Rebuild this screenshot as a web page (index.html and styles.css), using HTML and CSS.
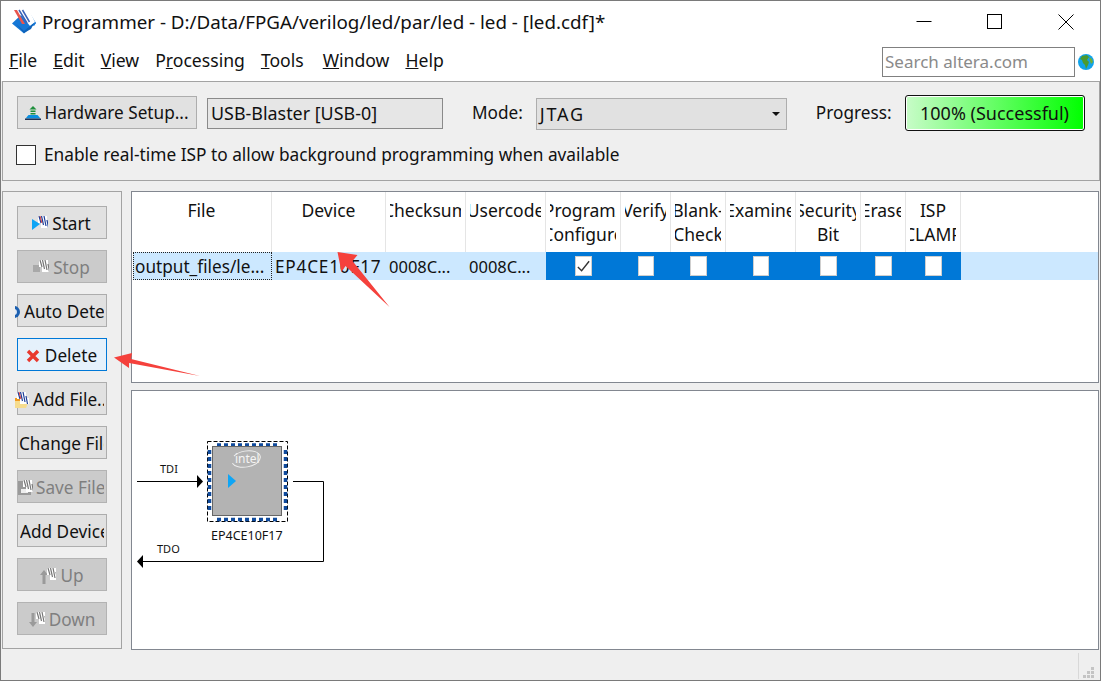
FILE: index.html
```html
<!DOCTYPE html>
<html lang="en">
<head>
<meta charset="utf-8">
<title>Programmer</title>
<link rel="stylesheet" href="styles.css">
</head>
<body>
<svg class="defs" width="0" height="0">
  <defs>
    <g id="chipmark">
      <path d="M0 0h9v6h3v6H3V7H0z" fill="#fff"/>
      <path d="M1 0l2 7M3.500 0l2 9M6 0l2 10M9 4l1.500 8" stroke="#1d3f9a" stroke-width="1.200" fill="none"/>
      <path d="M2 0l2 7" stroke="#e0433c" stroke-width="1"/>
    </g>
    <g id="graymark">
      <path d="M0 0h9v6h3v6H3V7H0z" fill="#fff"/>
      <path d="M1 0l2 7M3.500 0l2 9M6 0l2 10M9 4l1.500 8" stroke="#777" stroke-width="1.200" fill="none"/>
    </g>
  </defs>
</svg>
<div class="window">
  <header class="titlebar">
    <svg class="applogo" viewBox="0 0 26 26" width="26" height="26">
      <path d="M1 15.500L10 7l15 8-12 10.500z" fill="#1577d6"/>
      <path d="M14 4l4 0 7 11-2 3-9-6z" fill="#1577d6"/>
      <path d="M6 2h12l6 12-5 4z" fill="#fff"/>
      <path d="M3 2l8 14h3L6 2z" fill="#e8554e"/>
      <path d="M8 2l8 13M11.500 2l7 12" stroke="#3a62b8" stroke-width="1.500"/>
      <path d="M5 16l8 7 10-8-3 6-7 4z" fill="#0f62b8"/>
    </svg>
    <span class="title">Programmer - D:/Data/FPGA/verilog/led/par/led - led - [led.cdf]*</span>
    <div class="winctl">
      <svg width="16" height="16" viewBox="0 0 16 16"><path d="M0.500 7.500h15" stroke="#000"/></svg>
      <svg width="16" height="16" viewBox="0 0 16 16"><rect x="0.500" y="0.500" width="14" height="14" fill="none" stroke="#000"/></svg>
      <svg width="16" height="16" viewBox="0 0 16 16"><path d="M0.500 0.500l15 15M15.500 0.500l-15 15" stroke="#000"/></svg>
    </div>
  </header>
  <nav class="menubar">
    <span class="menu"><u>F</u>ile</span>
    <span class="menu"><u>E</u>dit</span>
    <span class="menu"><u>V</u>iew</span>
    <span class="menu">P<u>r</u>ocessing</span>
    <span class="menu tools"><u>T</u>ools</span>
    <span class="menu"><u>W</u>indow</span>
    <span class="menu"><u>H</u>elp</span>
    <div class="search">Search altera.com</div>
    <svg class="globe" viewBox="0 0 16 16" width="16" height="16">
      <circle cx="8" cy="8" r="8" fill="#11a3ea"/>
      <path d="M4 2l5-1 2 2-2 3 2 2-1 3-2 4-1-4-2-2-1-3-2-1z" fill="#4b9a2f"/>
      <path d="M11 3l3 2 1 3-2 2-1-3z" fill="#6fae3a"/>
    </svg>
  </nav>

  <section class="toolpanel">
    <div class="toolrow">
      <button class="btn hw">
        <svg class="ic" viewBox="0 0 16 16" width="16" height="16">
          <path d="M8 1l3.500 3.500h-7z" fill="#1f8f3c"/><path d="M5.500 5.500h5V7h-5zM5.500 8h5v1.500h-5z" fill="#1f8f3c"/>
          <path d="M3.500 10h9l3 3.500H.5z" fill="#0a8fe0"/><path d="M0 13.500h16V15H0z" fill="#235"/>
        </svg>
        <span>Hardware Setup...</span>
      </button>
      <div class="hwbox">USB-Blaster [USB-0]</div>
      <span class="modelabel">Mode:</span>
      <div class="select"><span>JTAG</span><i class="caret"></i></div>
      <span class="proglabel">Progress:</span>
      <div class="progress">100% (Successful)</div>
    </div>
    <label class="isprow"><span class="check"></span><span>Enable real-time ISP to allow background programming when available</span></label>
  </section>

  <main class="mainrow">
    <aside class="sidebar">
      <button class="btn side"><svg class="ic" viewBox="0 0 16 16" width="16" height="16"><path d="M0 3l8 5-8 6z" fill="#0ea5f5"/><use href="#chipmark" x="6" y="0"/></svg><span>Start</span></button>
      <button class="btn side off"><svg class="ic" viewBox="0 0 16 16" width="16" height="16"><rect x="0" y="5" width="7" height="7" fill="#a8a8a8"/><use href="#graymark" x="6" y="0"/></svg><span>Stop</span></button>
      <button class="btn side lead auto"><svg class="ic" viewBox="9 2 5 14" width="5" height="14"><circle cx="8" cy="9" r="6" fill="#1b5fb0"/><circle cx="8" cy="9" r="3" fill="#dfe9f5"/></svg><span>Auto Detect</span></button>
      <button class="btn side active"><svg class="ic" viewBox="0 0 14 14" width="14" height="14"><path d="M2 2l10 10M12 2L2 12" stroke="#e8392e" stroke-width="3.400"/></svg><span>Delete</span></button>
      <button class="btn side lead addfile"><svg class="ic" viewBox="0 0 14 16" width="14" height="16"><path d="M0 6h6l2 2h6l-3 8H0z" fill="#f6dc8e"/><path d="M0 6h5v3H0z" fill="#f29a1e"/><use href="#chipmark" x="2" y="0"/></svg><span>Add File...</span></button>
      <button class="btn side lead"><span>Change File...</span></button>
      <button class="btn side off lead savefile"><svg class="ic" viewBox="0 0 15 15" width="15" height="15"><rect x="0" y="1" width="13" height="14" fill="#9a9a9a"/><rect x="3" y="9" width="7" height="4" fill="#eee"/><use href="#graymark" x="5" y="0"/></svg><span>Save File...</span></button>
      <button class="btn side lead adddev"><span>Add Device...</span></button>
      <button class="btn side off"><svg class="ic" viewBox="0 0 17 16" width="17" height="16"><path d="M5 2l4 5H6.500v9h-3V7H1z" fill="#9a9a9a"/><use href="#graymark" x="8" y="0"/></svg><span>Up</span></button>
      <button class="btn side off"><svg class="ic" viewBox="0 0 17 16" width="17" height="16"><path d="M5 15l4-5H6.500V1h-3v9H1z" fill="#9a9a9a"/><use href="#graymark" x="8" y="0"/></svg><span>Down</span></button>
    </aside>

    <div class="rightcol">
      <div class="table">
        <div class="th"><span>File</span></div>
        <div class="th"><span>Device</span></div>
        <div class="th"><span>Checksum</span></div>
        <div class="th"><span>Usercode</span></div>
        <div class="th"><span>Program/</span><span>Configure</span></div>
        <div class="th"><span>Verify</span></div>
        <div class="th"><span>Blank-</span><span>Check</span></div>
        <div class="th"><span>Examine</span></div>
        <div class="th"><span>Security</span><span>Bit</span></div>
        <div class="th"><span>Erase</span></div>
        <div class="th"><span>ISP</span><span>CLAMP</span></div>
        <div class="th last"></div>

        <div class="td focus">output_files/le...</div>
        <div class="td dev">EP4CE10F17</div>
        <div class="td code">0008C...</div>
        <div class="td code">0008C...</div>
        <div class="td op"><span class="cb w17">
          <svg viewBox="0 0 16 18" width="15" height="18"><path d="M2 10l4 4 8-10" fill="none" stroke="#333" stroke-width="1.500"/></svg>
        </span></div>
        <div class="td op"><span class="cb"></span></div>
        <div class="td op"><span class="cb w17"></span></div>
        <div class="td op"><span class="cb"></span></div>
        <div class="td op"><span class="cb w17"></span></div>
        <div class="td op"><span class="cb w17"></span></div>
        <div class="td op"><span class="cb w17"></span></div>
        <div class="td"></div>
      </div>

      <div class="diagram">
        <svg class="chain" viewBox="132 391 966 258" width="966" height="258">
          <path d="M137 481.500h62M293 481.500h30.500v80H142" fill="none" stroke="#000" stroke-width="1"/>
          <path d="M197 475l6 6.500-6 6.500z" fill="#000"/>
          <path d="M143 555l-6 6.500 6 6.500z" fill="#000"/>
          <text class="lbl" x="160" y="473">TDI</text>
          <text class="lbl" x="157" y="553">TDO</text>
          <rect x="207.500" y="441.500" width="80" height="80" fill="none" stroke="#000" stroke-width="1" stroke-dasharray="4 2"/>
          <path class="pins" d="M217 445h62M217 519.500h62M209.500 450v62M285.500 450v62"/>
          <rect x="212.500" y="446.500" width="69" height="69" fill="#b3b3b3" stroke="#666" stroke-width="1"/>
          <ellipse cx="246" cy="459" rx="14.500" ry="8" fill="none" stroke="#eee" stroke-width="1" stroke-dasharray="34 8" transform="rotate(-10 246 459)"/>
          <text class="intel" x="235" y="463">intel</text>
          <path d="M228 474l8 7-8 7z" fill="#0ea5f5"/>
          <text class="lbl chipname" x="211" y="540">EP4CE10F17</text>
        </svg>
      </div>
    </div>
  </main>

  <footer class="statusbar">
    <i class="statussep"></i>
    <svg class="grip" viewBox="0 0 12 12" width="12" height="12">
      <path d="M8 0h3v3H8zM4 4h3v3H4zM8 4h3v3H8zM0 8h3v3H0zM4 8h3v3H4zM8 8h3v3H8z" fill="#c4c4c4"/>
    </svg>
  </footer>
</div>

<svg class="annot" viewBox="0 0 1101 681" width="1101" height="681">
  <path d="M337.500 252l20 3-5 6 37 46-44-41-4 6z" fill="#f5413c"/>
  <path d="M114 357.500l18-4.500-1 6 69 17-71-13v5z" fill="#f5413c"/>
</svg>
</body>
</html>
```

FILE: styles.css
```css
* { box-sizing: border-box; }
html, body { margin: 0; padding: 0; }
body {
  width: 1101px;
  height: 681px;
  overflow: hidden;
  position: relative;
  background: #fff;
  font-family: "Noto Sans", "Open Sans", sans-serif;
  font-size: 17.200px;
  color: #111;
}
.defs { position: absolute; }
.window {
  width: 1101px;
  height: 681px;
  border: 1px solid #7a7a7a;
  display: flex;
  flex-direction: column;
  background: #efefef;
}
.titlebar {
  height: 41px;
  flex: none;
  background: #fff;
  display: flex;
  align-items: center;
  padding-left: 10px;
  position: relative;
}
.applogo { margin-top: -1px; }
.title { margin-left: 5px; font-size: 18.800px; white-space: nowrap; }
.winctl {
  margin-left: auto;
  display: flex;
  gap: 55px;
  margin-right: 26px;
  padding-top: 1px;
}
.menubar {
  height: 39px;
  flex: none;
  background: #fff;
  display: flex;
  align-items: center;
  padding: 0 0 4px 8px;
  gap: 16px;
  font-size: 17.600px;
}
.menu { white-space: nowrap; }
.tools { margin-right: 3px; }
.search {
  margin-left: auto;
  width: 193px;
  height: 30px;
  border: 1px solid #808080;
  color: #8a8a8a;
  padding-left: 2px;
  font-size: 17px;
  line-height: 28px;
  white-space: nowrap;
  overflow: hidden;
  margin-top: 4px;
}
.globe { margin-left: -13px; margin-right: 6px; margin-top: 4px; }

.toolpanel {
  margin-left: 1px;
  height: 100px;
  flex: none;
  border: 1px solid #a3a3a3;
  padding: 13px 13px 0 14px;
}
.toolrow { display: flex; align-items: flex-start; height: 36px; }
.btn {
  font: inherit;
  color: inherit;
  background: #e1e1e1;
  border: 1px solid #adadad;
  display: flex;
  align-items: center;
  justify-content: center;
  white-space: nowrap;
  padding: 0;
}
.btn .ic { flex: none; }
.hw { width: 180px; height: 33px; margin-top: 1px; gap: 3px; }
.hwbox {
  width: 236px;
  height: 31px;
  margin: 3px 0 0 10px;
  border: 1px solid #8a8a8a;
  background: #e6e6e6;
  padding-left: 3px;
  font-size: 17.900px;
  line-height: 29px;
}
.modelabel { margin: 5px 0 0 29px; line-height: 26px; }
.select {
  width: 251px;
  height: 32px;
  margin: 3px 0 0 13px;
  background: #e1e1e1;
  border: 1px solid #adadad;
  display: flex;
  align-items: center;
  justify-content: space-between;
  padding: 0 6px 0 3px;
  font-size: 18px;
  letter-spacing: 1.800px;
}
.caret {
  width: 0;
  height: 0;
  border-left: 4px solid transparent;
  border-right: 4px solid transparent;
  border-top: 4px solid #111;
}
.proglabel { margin: 5px 0 0 29px; line-height: 26px; }
.progress {
  width: 180px;
  height: 36px;
  margin-left: 13px;
  border: 1px solid #111;
  border-radius: 3px;
  background: linear-gradient(90deg, #c8fcc8, #00ff00);
  text-align: center;
  font-size: 18px;
  line-height: 34px;
  box-shadow: inset 0 0 0 1px #fff;
}
.isprow { display: flex; align-items: center; margin: 12px 0 0 -1px; gap: 8px; font-size: 17.300px; }
.check { width: 20px; height: 20px; border: 1px solid #333; background: #fff; flex: none; }

.mainrow { display: flex; margin: 10px 0 0 1px; height: 459px; flex: none; }
.sidebar {
  width: 120px;
  height: 458px;
  flex: none;
  border: 1px solid #a3a3a3;
  padding: 14px 13px 0 14px;
  display: flex;
  flex-direction: column;
  gap: 11px;
}
.side {
  width: 90px;
  height: 33px;
  flex: none;
  gap: 4px;
  padding: 2px 2px 0 1px;
}
.side span { min-width: 0; overflow: hidden; }
.lead { justify-content: flex-start; }
.auto .ic { margin-left: -4px; }
.addfile .ic { margin-left: -4px; }
.savefile .ic { margin-left: -1px; }
.savefile { gap: 3px; }
.adddev { padding-left: 2px; }
.off { background: #cbcbcb; color: #7f7f7f; border-color: #b3b3b3; }
.active { background: #e5f1fb; border-color: #0078d7; gap: 5px; }

.rightcol { margin-left: 9px; width: 968px; flex: none; display: flex; flex-direction: column; gap: 7px; }
.table {
  height: 192px;
  flex: none;
  border: 1px solid #828790;
  background: #fff;
  display: grid;
  grid-template-columns: 140px 114px 80px 80px 75px 50px 55px 70px 65px 45px 55px 1fr;
  grid-template-rows: 60px 28px;
  align-content: start;
}
.th {
  border-right: 1px solid #e5e5e5;
  padding: 6px 4px 0;
  font-size: 17.500px;
  line-height: 24px;
  display: flex;
  flex-direction: column;
  align-items: center;
  min-width: 0;
  white-space: nowrap;
}
.th span {
  display: flex;
  justify-content: center;
  width: 100%;
  overflow: hidden;
}
.th.last { border-right: 0; }
.td {
  background: #cce8ff;
  line-height: 29px;
  padding-left: 3px;
  white-space: nowrap;
  overflow: hidden;
  min-width: 0;
}
.focus { outline: 1px dotted #222; outline-offset: -1px; margin-left: 1px; padding-left: 2px; }
.dev { letter-spacing: 0.800px; }
.code { font-size: 16.500px; }
.op { background: #0078d7; padding: 0; display: flex; align-items: center; justify-content: center; }
.cb {
  width: 16px;
  height: 20px;
  background: #fff;
  border: 1px solid #cfcfcf;
  display: block;
}
.w17 { width: 17px; }
.cb svg { display: block; }
.diagram {
  height: 260px;
  flex: none;
  border: 1px solid #828790;
  background: #fff;
}
.chain { display: block; }
.lbl { font-size: 11px; fill: #111; }
.chipname { font-size: 12.500px; }
.pins { fill: none; stroke: #0f4a9c; stroke-width: 3.500; stroke-dasharray: 4 3; }
.intel { font-size: 12px; fill: #f4f4f4; }

.statusbar { flex: 1; position: relative; }
.statussep { position: absolute; right: 21px; top: 3px; bottom: 1px; width: 1px; background: #d8d8d8; }
.grip { position: absolute; right: 5px; bottom: 1px; }
.annot { position: absolute; left: 0; top: 0; pointer-events: none; }
```
